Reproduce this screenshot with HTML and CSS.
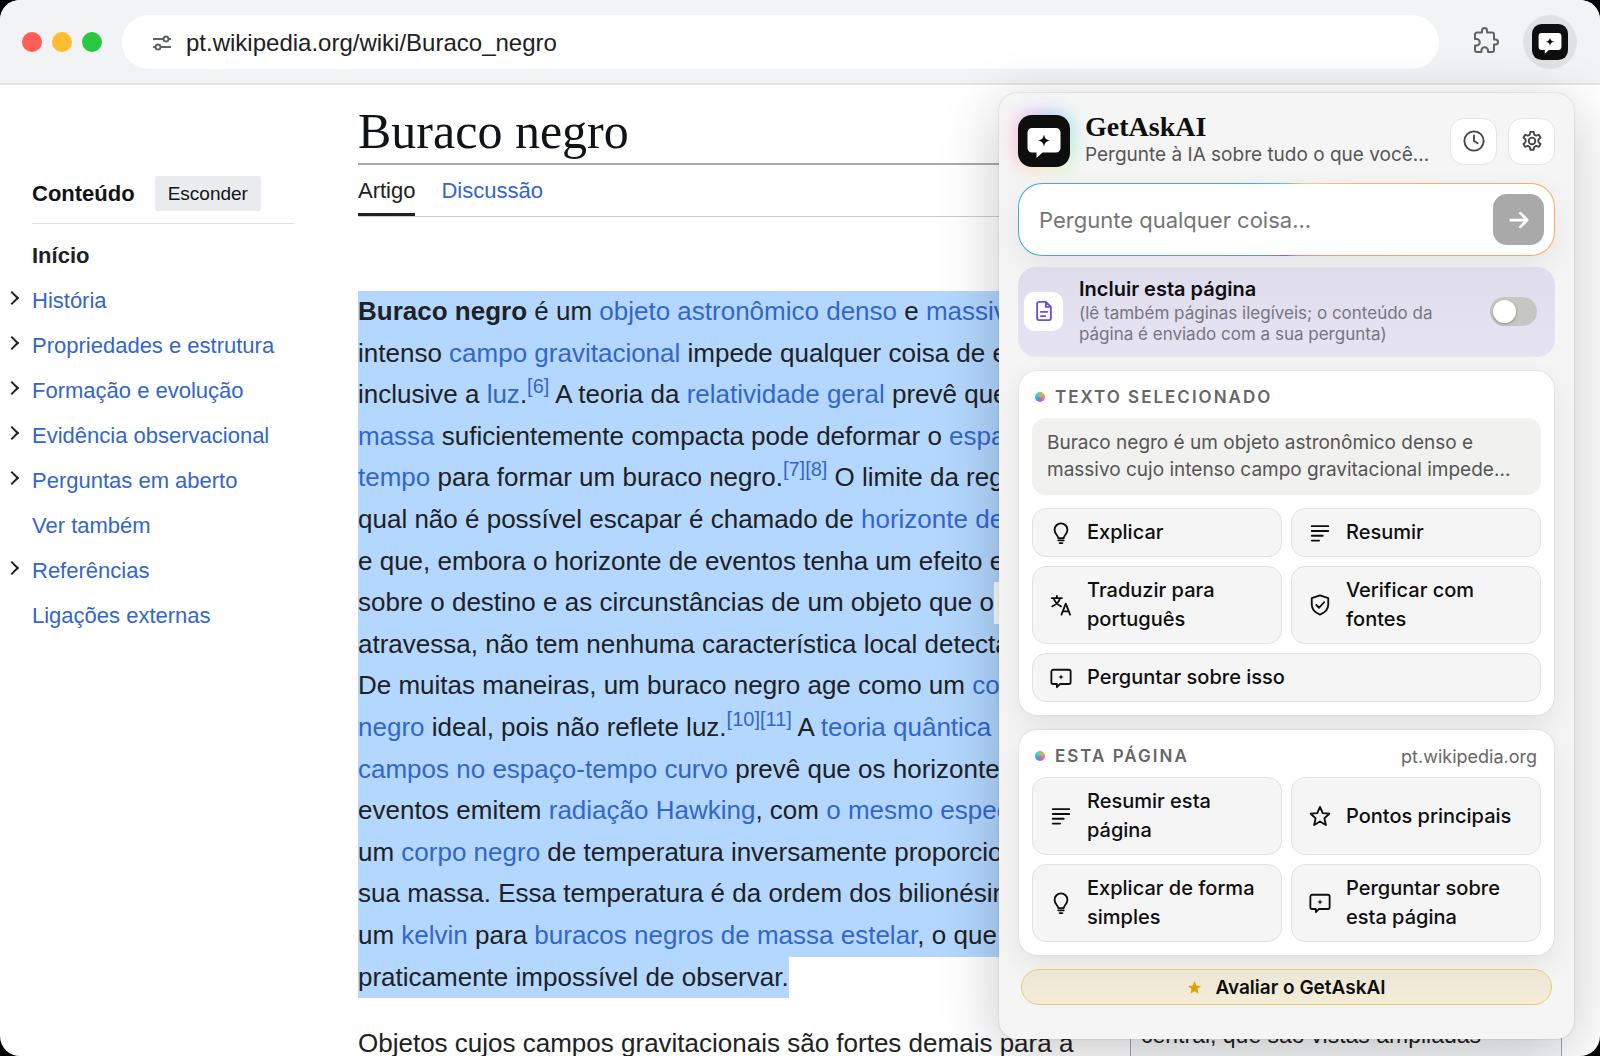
FILE: index.html
```html
<!DOCTYPE html>
<html lang="pt">
<head>
<meta charset="utf-8">
<title>Buraco negro</title>
<link rel="stylesheet" href="styles.css">
</head>
<body>
<svg class="sprite" aria-hidden="true">
  <symbol id="i-bulb" viewBox="0 0 24 24"><path d="M9 17.500c0-3-4-4-4-9a7 7 0 0 1 14 0c0 5-4 6-4 9zM9 20h6M10.500 23h3"/></symbol>
  <symbol id="i-lines" viewBox="0 0 24 24"><path d="M3 4.500h18M3 9.800h18M3 15h12M3 20.300h8"/></symbol>
  <symbol id="i-translate" viewBox="0 0 24 24"><path d="M2 4.500h11M7.500 2v2.500M4 4.500c1 4 4 7 8 9M11 4.500c-1 4-4 7-8.500 9M12.500 22.500l4.700-12 4.700 12M14 19h6.500"/></symbol>
  <symbol id="i-shield" viewBox="0 0 24 24"><path d="M12 1.500l9 3v7c0 5.500-4 9-9 11-5-2-9-5.500-9-11v-7zM8 12l3 3 5.500-6"/></symbol>
  <symbol id="i-chat" viewBox="0 0 24 24"><path d="M3.500 3h17a2 2 0 0 1 2 2v11.500a2 2 0 0 1-2 2H11L7.500 22v-3.500h-4a2 2 0 0 1-2-2V5a2 2 0 0 1 2-2z"/><path class="solid" d="M12 7.800l.8 2.200 2.200.8-2.200.8-.8 2.200-.8-2.200-2.200-.8 2.200-.8z"/></symbol>
  <symbol id="i-star" viewBox="0 0 24 24"><path d="M12 2l3 6.800 7.200.7-5.400 5 1.600 7.300L12 18l-6.400 3.800 1.600-7.300-5.400-5L9 8.800z"/></symbol>
  <symbol id="i-logo" viewBox="0 0 52 52"><rect width="52" height="52" rx="14" fill="#0e0e0e"/><path fill="#fff" d="M14 13h24a4.500 4.500 0 0 1 4.500 4.500v15.500A4.500 4.500 0 0 1 38 37.500H24.500L18.500 43V37.500H14a4.500 4.500 0 0 1-4.500-4.500v-15.500A4.500 4.500 0 0 1 14 13z"/><path fill="#0e0e0e" d="M26 19.500c.9 4 2 5.100 6.200 6-4.200.9-5.300 2-6.200 6.200-.9-4.200-2-5.300-6.200-6.200 4.200-.9 5.300-2 6.200-6z"/></symbol>
</svg>

<div class="window">
  <header class="toolbar">
    <div class="lights"><span class="light red"></span><span class="light yellow"></span><span class="light green"></span></div>
    <div class="address">
      <svg class="tune" viewBox="0 0 20 16" aria-hidden="true"><path d="M1 4h10M17 4h2M9 12h10M1 12h2"/><circle cx="14" cy="4" r="2.500"/><circle cx="6" cy="12" r="2.500"/></svg>
      <span>pt.wikipedia.org/wiki/Buraco_negro</span>
    </div>
    <button class="ext" aria-label="Extensões"><svg viewBox="0 0 26 28" aria-hidden="true"><path d="M2 8.500a2 2 0 0 1 2-2h5V4.500a2.500 2.500 0 0 1 5 0v2h5a2 2 0 0 1 2 2v5h1.500a2.500 2.500 0 0 1 0 5H21V24a2 2 0 0 1-2 2h-4v-1.500a3.300 3.300 0 0 0-6.600 0V26H4a2 2 0 0 1-2-2v-4.500h1.500a3.300 3.300 0 0 0 0-6.600H2z"/></svg></button>
    <button class="ext-active" aria-label="GetAskAI"><svg aria-hidden="true"><use href="#i-logo"/></svg></button>
  </header>

  <div class="page">
    <nav class="toc" aria-label="Conteúdo">
      <div class="toc-head"><strong>Conteúdo</strong><button>Esconder</button></div>
      <ul>
        <li><a class="current" href="#">Início</a></li>
        <li class="more"><a href="#">História</a></li>
        <li class="more"><a href="#">Propriedades e estrutura</a></li>
        <li class="more"><a href="#">Formação e evolução</a></li>
        <li class="more"><a href="#">Evidência observacional</a></li>
        <li class="more"><a href="#">Perguntas em aberto</a></li>
        <li><a href="#">Ver também</a></li>
        <li class="more"><a href="#">Referências</a></li>
        <li><a href="#">Ligações externas</a></li>
      </ul>
    </nav>

    <main class="article">
      <h1>Buraco negro</h1>
      <div class="tabs"><a class="active" href="#">Artigo</a><a href="#">Discussão</a></div>
      <div class="columns">
        <div class="prose">
          <p class="selected">
            <span><b>Buraco negro</b> é um <a href="#">objeto astronômico denso</a> e <a href="#">massivo</a> cujo</span>
            <span>intenso <a href="#">campo gravitacional</a> impede qualquer coisa de escapar,</span>
            <span>inclusive a <a href="#">luz</a>.<sup><a href="#">[6]</a></sup> A teoria da <a href="#">relatividade geral</a> prevê que uma</span>
            <span><a href="#">massa</a> suficientemente compacta pode deformar o <a href="#">espaço-</a></span>
            <span><a href="#">tempo</a> para formar um buraco negro.<sup><a href="#">[7]</a><a href="#">[8]</a></sup> O limite da região da</span>
            <span>qual não é possível escapar é chamado de <a href="#">horizonte de</a></span>
            <span>e que, embora o horizonte de eventos tenha um efeito enorme</span>
            <span>sobre o destino e as circunstâncias de um objeto que o</span>
            <span>atravessa, não tem nenhuma característica local detectável.</span>
            <span>De muitas maneiras, um buraco negro age como um <a href="#">corpo</a></span>
            <span><a href="#">negro</a> ideal, pois não reflete luz.<sup><a href="#">[10]</a><a href="#">[11]</a></sup> A <a href="#">teoria quântica de</a></span>
            <span><a href="#">campos no espaço-tempo curvo</a> prevê que os horizontes de</span>
            <span>eventos emitem <a href="#">radiação Hawking</a>, com <a href="#">o mesmo espectro</a></span>
            <span>um <a href="#">corpo negro</a> de temperatura inversamente proporcional à</span>
            <span>sua massa. Essa temperatura é da ordem dos bilionésimos de</span>
            <span>um <a href="#">kelvin</a> para <a href="#">buracos negros de massa estelar</a>, o que a torna</span>
            <span>praticamente impossível de observar.</span>
          </p>
          <p>Objetos cujos campos gravitacionais são fortes demais para a</p>
        </div>
        <aside class="infobox"><p>central, que são vistas ampliadas</p></aside>
      </div>
    </main>
  </div>

  <section class="popup" aria-label="GetAskAI">
    <header class="brand">
      <span class="brand-logo"><svg aria-hidden="true"><use href="#i-logo"/></svg></span>
      <div class="brand-text"><h2>GetAskAI</h2><p>Pergunte à IA sobre tudo o que você…</p></div>
      <div class="brand-actions">
        <button aria-label="Histórico"><svg class="icon" viewBox="0 0 24 24" aria-hidden="true"><circle cx="12" cy="12" r="10.500"/><path d="M12 6v6l4 2.500"/></svg></button>
        <button aria-label="Configurações"><svg class="icon" viewBox="0 0 24 24" aria-hidden="true"><circle cx="12" cy="12" r="3.600"/><path d="M10.200 2h3.600l.6 3 2.200 1.200 2.900-1 1.800 3.100-2.300 2v2.900l2.300 2-1.800 3.100-2.900-1-2.200 1.200-.6 3h-3.600l-.6-3-2.200-1.200-2.900 1-1.800-3.100 2.300-2v-2.900l-2.300-2 1.800-3.100 2.900 1L9.600 5z"/></svg></button>
      </div>
    </header>

    <form class="ask">
      <input type="text" placeholder="Pergunte qualquer coisa..." aria-label="Pergunta">
      <button type="button" aria-label="Enviar"><svg viewBox="0 0 24 24" aria-hidden="true"><path d="M3 12h18M13.500 4.500L21 12l-7.500 7.500"/></svg></button>
    </form>

    <label class="include">
      <span class="doc"><svg viewBox="0 0 24 24" aria-hidden="true"><path d="M14 2H6.500a2 2 0 0 0-2 2v16a2 2 0 0 0 2 2h11a2 2 0 0 0 2-2V7.500zM14 2v5.500h5.500M8.500 13h7M8.500 17.500h5"/></svg></span>
      <span class="include-text"><strong>Incluir esta página</strong><small>(lê também páginas ilegíveis; o conteúdo da página é enviado com a sua pergunta)</small></span>
      <input class="switch" type="checkbox">
    </label>

    <section class="card">
      <div class="card-head"><i class="dot"></i><h3>Texto selecionado</h3></div>
      <blockquote>Buraco negro é um objeto astronômico denso e<br>massivo cujo intenso campo gravitacional impede…</blockquote>
      <div class="actions">
        <button><svg class="icon" aria-hidden="true"><use href="#i-bulb"/></svg><span>Explicar</span></button>
        <button><svg class="icon" aria-hidden="true"><use href="#i-lines"/></svg><span>Resumir</span></button>
        <button><svg class="icon" aria-hidden="true"><use href="#i-translate"/></svg><span>Traduzir para português</span></button>
        <button><svg class="icon" aria-hidden="true"><use href="#i-shield"/></svg><span>Verificar com fontes</span></button>
        <button class="wide"><svg class="icon" aria-hidden="true"><use href="#i-chat"/></svg><span>Perguntar sobre isso</span></button>
      </div>
    </section>

    <section class="card">
      <div class="card-head"><i class="dot"></i><h3>Esta página</h3><span class="host">pt.wikipedia.org</span></div>
      <div class="actions">
        <button><svg class="icon" aria-hidden="true"><use href="#i-lines"/></svg><span>Resumir esta página</span></button>
        <button><svg class="icon" aria-hidden="true"><use href="#i-star"/></svg><span>Pontos principais</span></button>
        <button><svg class="icon" aria-hidden="true"><use href="#i-bulb"/></svg><span>Explicar de forma simples</span></button>
        <button><svg class="icon" aria-hidden="true"><use href="#i-chat"/></svg><span>Perguntar sobre esta página</span></button>
      </div>
    </section>

    <button class="rate"><svg aria-hidden="true"><use href="#i-star"/></svg>Avaliar o GetAskAI</button>
  </section>
</div>
</body>
</html>
```
FILE: styles.css
```css
* { box-sizing: border-box; }

body {
  margin: 0;
  background: #000;
  color: #202122;
  font-family: "Liberation Sans", Arial, sans-serif;
}

button, input { font: inherit; color: inherit; }
button { border: 0; padding: 0; background: none; }
h1, h2, h3, p, ul, blockquote { margin: 0; padding: 0; }
ul { list-style: none; }
a { color: #3366cc; text-decoration: none; }
svg { display: block; }
.sprite { position: absolute; width: 0; height: 0; }

.window {
  position: relative;
  display: flex;
  flex-direction: column;
  height: 100vh;
  overflow: hidden;
  border-radius: 20px;
  background: #fff;
}

/* Browser toolbar */
.toolbar {
  display: flex;
  align-items: center;
  flex: none;
  padding: 15px 23px 14px 22px;
  border-bottom: 2px solid #e3e4e6;
  background: #f1f3f4;
}
.lights { display: flex; gap: 10px; margin-right: 20px; }
.light { width: 20px; height: 20px; border-radius: 50%; }
.red { background: #ff5f57; }
.yellow { background: #febc2e; }
.green { background: #28c840; }
.address {
  display: flex;
  flex: 1;
  align-items: center;
  gap: 14px;
  height: 54px;
  padding: 2px 30px 0;
  border-radius: 27px;
  background: #fff;
  font-size: 24px;
}
.tune { width: 20px; height: 16px; fill: none; stroke: #5f6368; stroke-width: 2; }
.ext { margin: 0 24px 4px 34px; }
.ext svg { width: 26px; height: 28px; fill: none; stroke: #5f6368; stroke-width: 2; stroke-linejoin: round; }
.ext-active { padding: 9px; border-radius: 50%; background: #dfe1e3; }
.ext-active svg { width: 36px; height: 36px; }

/* Encyclopedia page */
.page {
  display: grid;
  grid-template-columns: 262px 1fr;
  grid-template-rows: minmax(0, 1fr);
  gap: 64px;
  flex: 1;
  min-height: 0;
  padding: 0 38px 0 32px;
}
.toc { padding-top: 91px; font-size: 22px; }
.toc-head {
  display: flex;
  align-items: center;
  gap: 20px;
  padding-bottom: 12px;
  margin-bottom: 9px;
  border-bottom: 1px solid #dfe1e5;
  color: #101418;
}
.toc-head button {
  height: 35px;
  padding: 0 13px;
  border-radius: 2px;
  background: #eaecf0;
  font-size: 19px;
}
.toc li { position: relative; line-height: 45px; }
.toc .current { color: #202122; font-weight: bold; }
.toc .more::before {
  content: "";
  position: absolute;
  left: -25px;
  top: 15px;
  width: 8px;
  height: 8px;
  border: solid #202122;
  border-width: 2px 2px 0 0;
  transform: rotate(45deg);
}

.article { display: flex; flex-direction: column; min-width: 0; min-height: 0; }
h1 {
  padding: 17px 0 3px;
  border-bottom: 2px solid #a9abae;
  color: #101418;
  font: 50px/58px "Liberation Serif", Georgia, serif;
}
.tabs { display: flex; gap: 26px; border-bottom: 1px solid #c8ccd1; font-size: 22px; }
.tabs a { height: 51px; line-height: 52px; }
.tabs .active { border-bottom: 3px solid #202122; color: #202122; }
.columns {
  display: grid;
  grid-template-columns: minmax(0, 1fr) 432px;
  grid-template-rows: minmax(0, 1fr);
  flex: 1;
  min-height: 0;
  padding-top: 74px;
}
.prose { min-width: 0; font-size: 26px; line-height: 1.6; white-space: nowrap; }
.prose p { margin-bottom: 25px; }
.selected span { display: block; width: fit-content; background: #b3d7ff; }
sup { font-size: 20px; line-height: 0; }
.infobox {
  display: flex;
  flex-direction: column;
  justify-content: flex-end;
  padding: 0 10px 5px;
  border: solid #a2a9b1;
  border-width: 1px 1px 0;
  background: #f8f9fa;
  font-size: 23px;
  line-height: 32px;
}

/* Extension popup */
.popup {
  position: absolute;
  top: 93px;
  right: 26px;
  display: flex;
  flex-direction: column;
  width: 575px;
  padding: 20px 19px 34px;
  border-radius: 18px;
  background: #f5f5f5;
  box-shadow: 0 0 2px rgba(0, 0, 0, .2), 0 14px 60px rgba(0, 0, 0, .22);
  color: #0e0e0e;
  font-family: Inter, sans-serif;
}
.icon {
  flex: none;
  width: 22px;
  height: 22px;
  fill: none;
  stroke: currentColor;
  stroke-width: 2;
  stroke-linecap: round;
  stroke-linejoin: round;
}
.solid { fill: currentColor; stroke: none; }

.brand { display: flex; align-items: center; gap: 15px; }
.brand-logo { position: relative; }
.brand-logo::before {
  content: "";
  position: absolute;
  inset: -4px;
  border-radius: 18px;
  background: conic-gradient(#8c8cff, #5fe0e0, #8ff0b0, #ffe08a, #ff9ab8, #ff8ad0, #8c8cff);
  filter: blur(8px);
  opacity: .5;
}
.brand-logo svg { position: relative; width: 52px; height: 52px; }
.brand-text { flex: 1; white-space: nowrap; }
h2 { font: bold 28px/28px "Liberation Serif", Georgia, serif; }
.brand-text p { color: #555; font-size: 19px; line-height: 28px; }
.brand-actions { display: flex; gap: 11px; }
.brand-actions button {
  display: grid;
  place-items: center;
  width: 47px;
  height: 47px;
  border: 1px solid #e4e4e2;
  border-radius: 14px;
  background: #fff;
  color: #444;
}

.ask {
  display: flex;
  align-items: center;
  margin-top: 14px;
  padding: 10px 10px 10px 20px;
  border: 1px solid transparent;
  border-radius: 24px;
  background:
    linear-gradient(#fff, #fff) padding-box,
    conic-gradient(#4ed6a0, #f5d25c 8%, #ffb45c 20%, #ff9a6c 35%, #f27ab8 46%, #8a5cf0 50%, #4a9cf0 60%, #35b0f0 85%, #4ed6a0) border-box;
  box-shadow: 0 10px 30px rgba(0, 0, 0, .07);
}
.ask input {
  flex: 1;
  min-width: 0;
  padding: 0;
  border: 0;
  outline: 0;
  background: none;
  font-size: 22px;
}
.ask input::placeholder { color: #757575; opacity: 1; }
.ask button {
  display: grid;
  place-items: center;
  width: 51px;
  height: 51px;
  border-radius: 14px;
  background: #a9a9a9;
}
.ask button svg { width: 22px; height: 22px; fill: none; stroke: #fff; stroke-width: 3; stroke-linecap: round; stroke-linejoin: round; }

.include {
  display: flex;
  align-items: center;
  margin-top: 11px;
  padding: 10px 18px 12px 6px;
  border-radius: 18px;
  background: linear-gradient(#dfdcec, #e6e3f3);
}
.doc {
  display: grid;
  place-items: center;
  width: 39px;
  height: 39px;
  border-radius: 10px;
  background: #fff;
}
.doc svg { width: 22px; height: 22px; fill: none; stroke: #6a4fe0; stroke-width: 2; stroke-linejoin: round; stroke-linecap: round; }
.include-text { flex: 1; padding: 0 40px 0 16px; }
.include-text strong { display: block; margin-bottom: 2px; font-size: 20px; line-height: 24px; font-weight: 600; }
.include-text small { display: block; color: #77757f; font-size: 17px; line-height: 21px; }
.switch {
  appearance: none;
  flex: none;
  display: flex;
  width: 47px;
  height: 29px;
  margin: 0;
  padding: 3px;
  border-radius: 15px;
  background: #c6c6c2;
}
.switch::before {
  content: "";
  width: 23px;
  height: 23px;
  border-radius: 50%;
  background: #fff;
  box-shadow: 0 1px 3px rgba(0, 0, 0, .3);
}

.card {
  margin: 14px 1px 0;
  padding: 12px 13px 13px;
  border-radius: 18px;
  background: #fff;
  box-shadow: 0 0 2px rgba(0, 0, 0, .15), 0 10px 30px rgba(0, 0, 0, .08);
}
.card + .card { margin-top: 15px; }
.card-head { display: flex; align-items: center; height: 28px; margin-bottom: 7px; padding: 0 4px 0 3px; color: #666; }
.dot {
  width: 10px;
  height: 10px;
  margin-right: 10px;
  border-radius: 50%;
  background: conic-gradient(#7fd06a, #f0a050, #f06a9a, #b05cf0, #3ba0f0, #3fd0d0, #7fd06a);
}
h3 { flex: 1; font-size: 17px; font-weight: 600; letter-spacing: 2px; text-transform: uppercase; }
.host { font-size: 18px; }
blockquote {
  margin-bottom: 13px;
  padding: 11px 15px 12px;
  border-radius: 14px;
  background: #f1f1ef;
  color: #555;
  font-size: 19px;
  line-height: 27px;
  white-space: nowrap;
}
.actions { display: grid; grid-template-columns: 1fr 1fr; gap: 9px; }
.actions button {
  display: flex;
  align-items: center;
  gap: 15px;
  padding: 9px 17px;
  border: 1px solid #e2e2e0;
  border-radius: 14px;
  background: #f5f5f5;
  font-size: 20px;
  font-weight: 500;
  line-height: 29px;
  text-align: left;
}
.actions .wide { grid-column: 1 / -1; }

.rate {
  display: flex;
  align-items: center;
  justify-content: center;
  gap: 13px;
  height: 36px;
  margin: 14px 3px 0;
  border: 1px solid #e8cb78;
  border-radius: 18px;
  background: linear-gradient(#ece6d6, #f5edd6);
  font-size: 19px;
  font-weight: 600;
}
.rate svg { width: 15px; height: 15px; fill: #dfa20a; }
```
